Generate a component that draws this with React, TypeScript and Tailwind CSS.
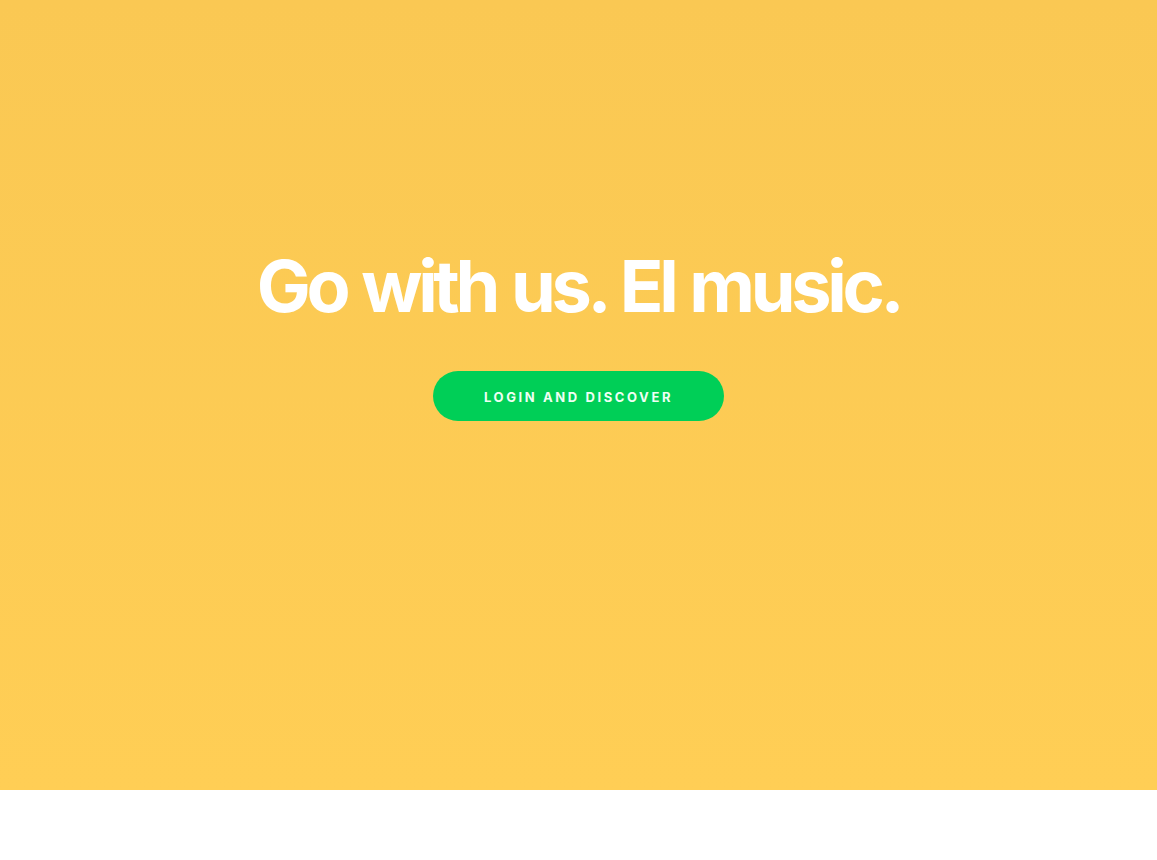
export default function App() {
  return (
    <main className="min-h-screen bg-white" style={{ fontFamily: "Inter, 'Liberation Sans', sans-serif" }}>
      <section className="h-[790px] bg-gradient-to-b from-[#fac853] to-[#ffce55] flex flex-col items-center pt-[250px]">
        <h1 className="text-[72px] leading-[72px] font-bold tracking-[-0.06em] [word-spacing:0.03em] text-white">
          Go with us. El music.
        </h1>
        <a
          href="#"
          className="mt-[49px] w-[291px] h-[50px] rounded-full bg-[#00cf57] flex items-center justify-center pt-[3px] text-[13px] font-bold uppercase tracking-[0.2em] text-[#effff4]"
        >
          Login and discover
        </a>
      </section>
    </main>
  );
}
